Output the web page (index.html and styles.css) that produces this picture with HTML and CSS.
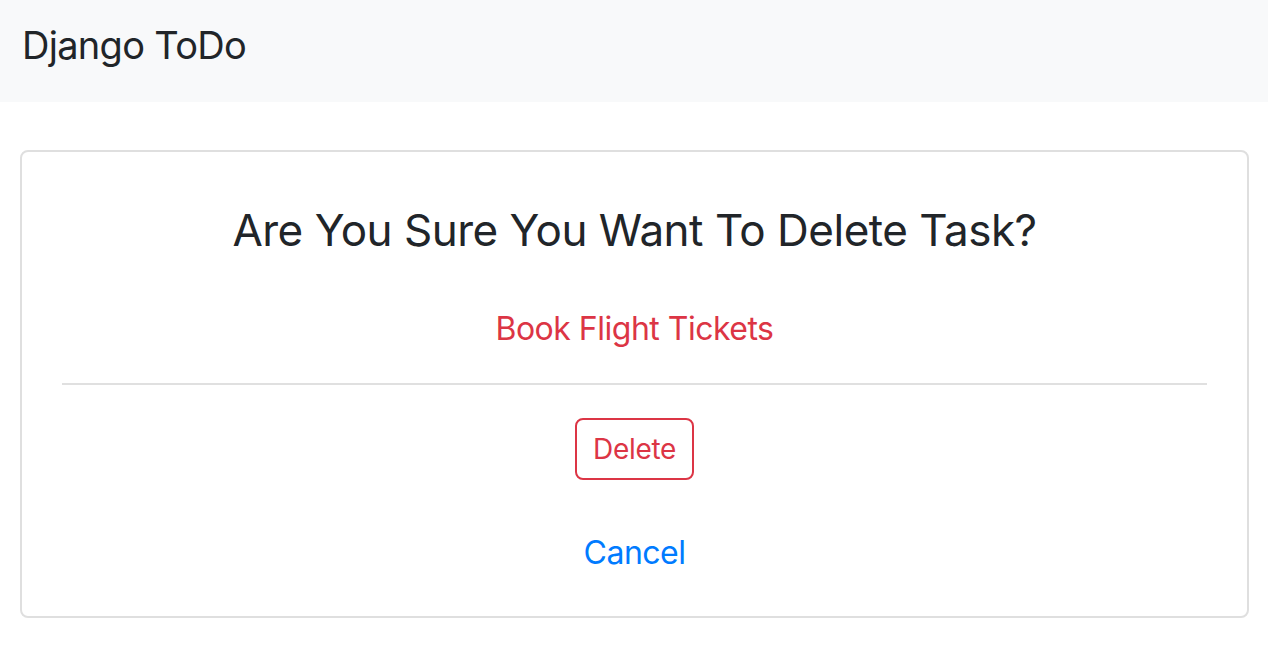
FILE: index.html
```html
<!DOCTYPE html>
<html>
<head>
<meta charset="utf-8">
<link rel="stylesheet" href="styles.css">
</head>
<body>
<nav class="navbar"><span class="brand">Django ToDo</span></nav>
<main class="container">
  <div class="card">
    <div class="card-body">
      <h3 class="title">Are You Sure You Want To Delete Task?</h3>
      <p class="task">Book Flight Tickets</p>
      <hr class="rule">
      <form class="actions">
        <button type="button" class="btn-delete">Delete</button>
      </form>
      <a class="cancel" href="#">Cancel</a>
    </div>
  </div>
</main>
</body>
</html>
```
FILE: styles.css
```css
html, body {
  margin: 0;
  padding: 0;
  background: #fff;
  font-family: Inter, "Noto Sans", sans-serif;
  color: #212529;
}
.navbar {
  height: 102px;
  background: #f8f9fa;
  display: flex;
  align-items: center;
  padding-left: 22px;
  padding-bottom: 12px;
  box-sizing: border-box;
}
.brand {
  font-size: 38px;
  letter-spacing: -0.7px;
  line-height: 48px;
  color: #212529;
}
.container {
  padding: 48px 19px 0 20px;
}
.card {
  border: 2px solid #dfdfdf;
  border-radius: 8px;
  height: 468px;
  box-sizing: border-box;
}
.card-body {
  padding: 40px 40px;
  display: flex;
  flex-direction: column;
  align-items: center;
  text-align: center;
}
.title {
  margin: 0;
  font-size: 44px;
  letter-spacing: -0.5px;
  font-weight: 400;
  line-height: 76px;
}
.task {
  margin: 0;
  margin-top: 37px;
  font-size: 32px;
  letter-spacing: -0.5px;
  line-height: 48px;
  color: #dc3545;
}
.rule {
  align-self: stretch;
  border: 0;
  border-top: 2px solid #e0e0e0;
  margin: 30px 0 33px;
}
.actions {
  margin: 0;
}
.btn-delete {
  font-family: inherit;
  font-size: 28px;
  letter-spacing: -0.3px;
  line-height: 42px;
  padding: 8px 16px;
  border: 2px solid #dc3545;
  border-radius: 8px;
  color: #dc3545;
  background: #fff;
}
.cancel {
  margin-top: 49px;
  font-size: 32px;
  letter-spacing: -0.5px;
  line-height: 48px;
  color: #007bff;
  text-decoration: none;
}
```
